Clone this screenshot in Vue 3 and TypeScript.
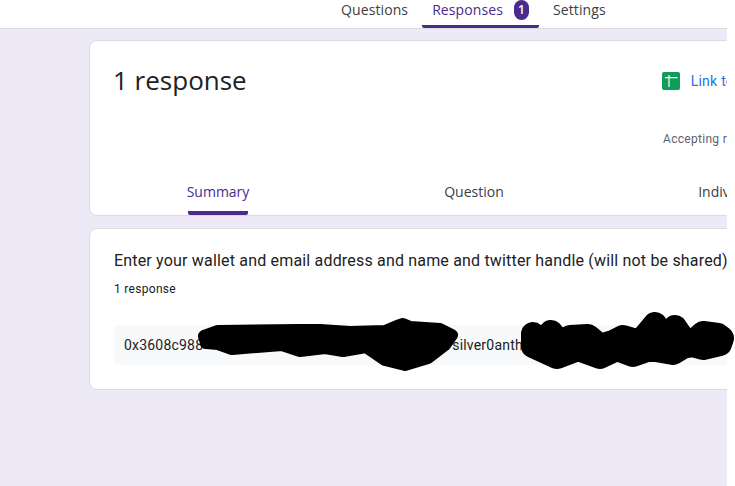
<template>
  <div class="page">
    <div class="frame">
      <header class="topbar">
        <nav class="top-tabs">
          <a v-for="tab in topTabs" :key="tab.label" class="top-tab" :class="{ active: tab.active }">
            {{ tab.label }}
            <span v-if="tab.count" class="badge">{{ tab.count }}</span>
          </a>
        </nav>
      </header>

      <main class="content">
        <section class="card summary-card">
          <div class="title-row">
            <h1 class="title">1 response</h1>
            <a class="sheets-link">
              <svg class="sheets-icon" width="18" height="18" viewBox="0 0 18 18">
                <rect width="18" height="18" rx="2" fill="#0f9d58" />
                <path d="M3 5h12.5v1.2H3z M6.4 3h1.2v12H6.4z" fill="#fff" />
              </svg>
              Link to Sheets
            </a>
          </div>
          <div class="accepting">Accepting responses</div>
          <div class="view-tabs">
            <button v-for="view in views" :key="view" class="view-tab" :class="{ active: view === 'Summary' }">
              <span class="view-label">{{ view }}</span>
            </button>
          </div>
        </section>

        <section class="card question-card">
          <h2 class="question">Enter your wallet and email address and name and twitter handle (will not be shared)</h2>
          <div class="count">1 response</div>
          <div class="answer">
            <span>0x3608c988</span>
            <span class="answer-rest">silver0anth</span>
          </div>
        </section>
      </main>
    </div>

    <!-- redaction scribbles drawn over the screenshot -->
    <svg class="scribbles" width="735" height="486" viewBox="0 0 735 486">
      <path
        class="scribble thin"
        d="M204 336 L218 331 L300 330 L320 330 L350 332 L385 331 L397 326 L403 324 L410 327 L425 328 L440 329 L452 335 L445 345 L428 358 L405 365 L385 360 L366 347 L343 351 L325 348 L300 351 L282 345 L232 349 L218 344 L206 343 Z"
      />
      <path
        class="scribble thick"
        d="M533 334 L542 342 L551 332 L560 344 L570 337 L588 336 L600 346 L613 342 L623 337 L640 342 L655 324 L665 338 L675 327 L688 346 L703 333 L718 335 L722 338 L720 344 L703 348 L688 344 L673 353 L650 349 L633 355 L617 349 L600 357 L578 349 L557 357 L533 346 Z"
      />
    </svg>
  </div>
</template>

<script setup lang="ts">
const topTabs = [
  { label: 'Questions', active: false, count: 0 },
  { label: 'Responses', active: true, count: 1 },
  { label: 'Settings', active: false, count: 0 },
]

const views = ['Summary', 'Question', 'Individual']
</script>

<style>
body {
  background: #fff;
}
</style>

<style scoped>
.page {
  position: relative;
  width: 735px;
  height: 486px;
  overflow: hidden;
  background: #fff;
}

.frame {
  width: 727px;
  height: 486px;
  overflow: hidden;
  background: #ede9f7;
  font-family: Roboto, "Liberation Sans", sans-serif;
}

.topbar {
  height: 28px;
  background: #fff;
  border-bottom: 1px solid #dadce0;
}

.top-tabs {
  display: flex;
  gap: 4px;
  margin-left: 331px;
  height: 28px;
}

.top-tab {
  display: flex;
  align-items: flex-start;
  height: 28px;
  padding: 1px 10px 0;
  box-sizing: border-box;
  font-family: "Open Sans", sans-serif;
  font-size: 14px;
  line-height: 17px;
  letter-spacing: 0.1px;
  color: #3c4043;
}

.top-tab.active {
  color: #4b2a8c;
  border-bottom: 3px solid #4b2a8c;
  border-radius: 0 0 2px 2px;
}

.badge {
  width: 15px;
  height: 20px;
  margin: -1px 0 0 11px;
  border-radius: 8px;
  background: #4b2a8c;
  color: #fff;
  font-size: 12px;
  font-weight: 600;
  line-height: 19px;
  text-align: center;
}

.content {
  padding: 11px 0 0 89px;
}

.card {
  box-sizing: border-box;
  width: 770px;
  background: #fff;
  border: 1px solid #dadce0;
  border-radius: 8px;
}

.summary-card {
  height: 176px;
  display: flex;
  flex-direction: column;
}

.title-row {
  display: flex;
  align-items: flex-start;
  justify-content: space-between;
  padding: 21px 76px 0 23px;
}

.title {
  margin: 0;
  font-family: "Open Sans", sans-serif;
  font-size: 26px;
  font-weight: 400;
  line-height: 36px;
  color: #202124;
}

.sheets-link {
  display: flex;
  align-items: center;
  gap: 11px;
  margin-top: 10px;
  font-size: 14px;
  line-height: 18px;
  letter-spacing: 0.25px;
  color: #1a73e8;
}

.accepting {
  margin: 33px 0 0 573px;
  font-size: 12px;
  line-height: 16px;
  letter-spacing: 0.3px;
  color: #5f6368;
  white-space: nowrap;
}

.view-tabs {
  display: flex;
  margin-top: auto;
  height: 48px;
}

.view-tab {
  width: 257px;
  padding: 0;
  border: 0;
  background: none;
  display: flex;
  justify-content: center;
  font-family: "Open Sans", sans-serif;
  font-size: 14px;
  color: #3c4043;
}

.view-label {
  display: flex;
  justify-content: center;
  width: 60px;
  height: 45px;
  padding-top: 15px;
  box-sizing: border-box;
  line-height: 20px;
  white-space: nowrap;
}

.view-tab.active .view-label {
  color: #4b2a8c;
  height: 48px;
  border-bottom: 4px solid #4b2a8c;
  border-radius: 0 0 2px 2px;
}

.question-card {
  height: 162px;
  margin-top: 12px;
  padding: 21px 24px 0;
}

.question {
  margin: 0;
  font-size: 16px;
  font-weight: 400;
  line-height: 22px;
  letter-spacing: 0.18px;
  color: #202124;
  white-space: nowrap;
}

.count {
  margin-top: 9px;
  font-size: 12px;
  line-height: 16px;
  letter-spacing: 0.3px;
  color: #202124;
}

.answer {
  display: flex;
  height: 40px;
  margin-top: 28px;
  padding: 0 10px;
  align-items: center;
  background: #f8f9fa;
  border-radius: 4px;
  font-size: 14px;
  letter-spacing: 0.2px;
  color: #202124;
}

.answer-rest {
  margin-left: 249px;
}

.scribbles {
  position: absolute;
  left: 0;
  top: 0;
  pointer-events: none;
}

.scribble {
  fill: #000;
  stroke: #000;
  stroke-linejoin: round;
}

.scribble.thin {
  stroke-width: 12px;
}

.scribble.thick {
  stroke-width: 24px;
}
</style>
